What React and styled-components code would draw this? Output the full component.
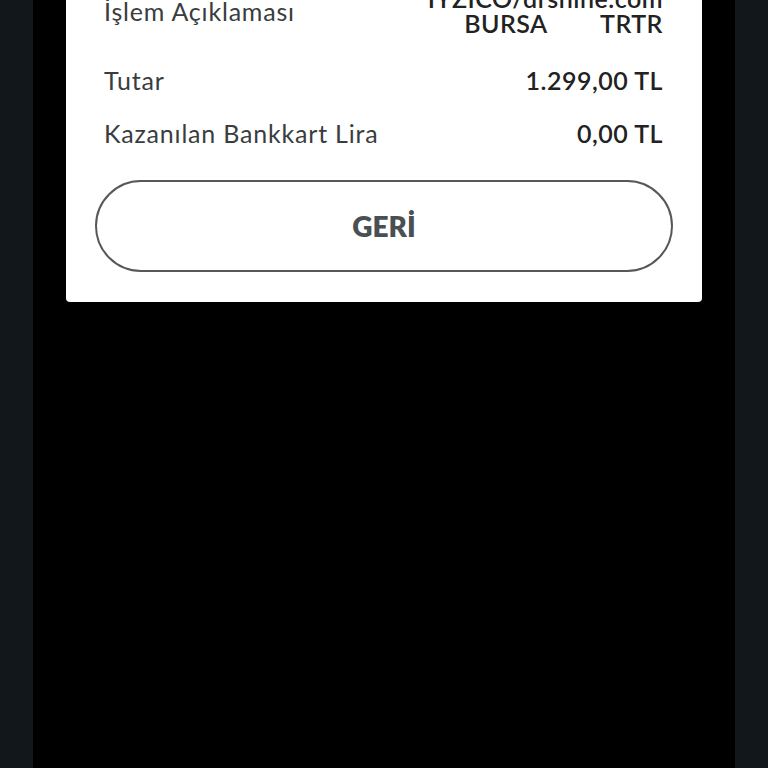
import React from "react";
import styled, { createGlobalStyle } from "styled-components";

const Global = createGlobalStyle`
  html, body { margin: 0; padding: 0; background: #11171a; }
  body { font-family: Lato, "Open Sans", sans-serif; }
`;

const Screen = styled.div`
  width: 702px;
  height: 768px;
  margin: 0 auto;
  background: #000;
  overflow: hidden;
  padding: 0 33px;
  box-sizing: border-box;
`;

const Card = styled.div`
  background: #fff;
  margin-top: -30px;
  padding: 16px 29px 30px;
  border-radius: 0 0 4px 4px;
  display: flex;
  flex-direction: column;
`;

const Rows = styled.div`
  display: flex;
  flex-direction: column;
  gap: 28px;
  padding: 0 10px 0 9px;
`;

const Row = styled.div`
  display: flex;
  justify-content: space-between;
  align-items: center;
  font-size: 25px;
  line-height: 25px;
  margin-bottom: ${(p) => (p.$extra ? "4px" : "0")};
`;

const Label = styled.div`
  color: #3a3d40;
  font-weight: 400;
  letter-spacing: 0.8px;
`;

const Value = styled.div`
  color: #222;
  font-weight: 600;
  text-align: right;
  white-space: pre;
  letter-spacing: 0.5px;
`;

const BackButton = styled.button`
  margin-top: 34px;
  height: 92px;
  width: 100%;
  border: 2px solid #55595c;
  border-radius: 46px;
  background: #fff;
  color: #4a4f54;
  font-family: Lato, sans-serif;
  font-weight: 800;
  font-size: 28px;
  cursor: pointer;
`;

export default function App() {
  return (
    <>
      <Global />
      <Screen>
        <Card>
          <Rows>
            <Row $extra>
              <Label>İşlem Açıklaması</Label>
              <Value>{"IYZICO/drshine.com\nBURSA        TRTR"}</Value>
            </Row>
            <Row>
              <Label>Tutar</Label>
              <Value>1.299,00 TL</Value>
            </Row>
            <Row>
              <Label>Kazanılan Bankkart Lira</Label>
              <Value>0,00 TL</Value>
            </Row>
          </Rows>
          <BackButton>GERİ</BackButton>
        </Card>
      </Screen>
    </>
  );
}
